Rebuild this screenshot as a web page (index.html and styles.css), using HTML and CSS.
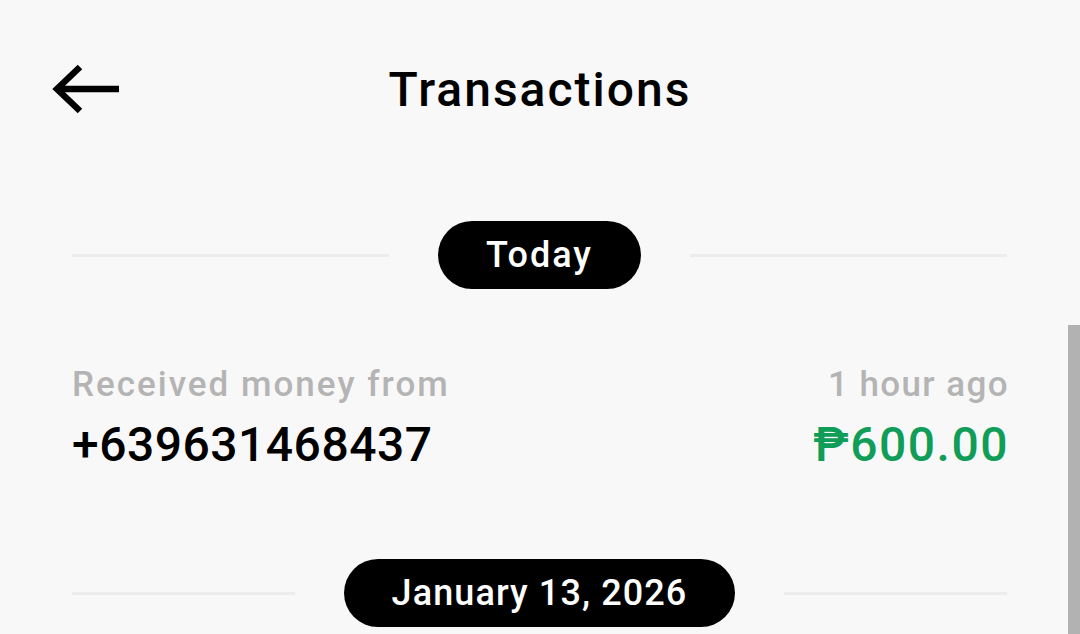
FILE: index.html
```html
<!DOCTYPE html>
<html lang="en">
<head>
    <meta charset="UTF-8">
    <meta name="viewport" content="width=device-width, initial-scale=1.0">
    <title>Transactions</title>
    <link rel="stylesheet" href="styles.css">
</head>
<body>
    <header class="top-bar">
        <button class="back-button" aria-label="Back">
            <svg width="68" height="50" viewBox="0 0 68 50">
                <path d="M67 25H6M28 3L5 25L28 47" fill="none" stroke="#000" stroke-width="6.5" stroke-linejoin="miter"/>
            </svg>
        </button>
        <h1 class="title">Transactions</h1>
        <span></span>
    </header>

    <main class="list">
        <div class="date-divider">
            <span class="line"></span>
            <span class="date-pill">Today</span>
            <span class="line"></span>
        </div>

        <div class="transaction">
            <div class="row">
                <span class="label">Received money from</span>
                <span class="label label-time">1 hour ago</span>
            </div>
            <div class="row row-main">
                <span class="party">+639631468437</span>
                <span class="amount">&#8369;600.00</span>
            </div>
        </div>

        <div class="date-divider">
            <span class="line"></span>
            <span class="date-pill date-long">January 13, 2026</span>
            <span class="line"></span>
        </div>
    </main>

    <div class="scroll-thumb"></div>
</body>
</html>
```

FILE: styles.css
```css
html, body {
    margin: 0;
    height: 100%;
    overflow: hidden;
}
body {
    font-family: Roboto, "Noto Sans", sans-serif;
    background-color: #f8f8f8;
    color: #000;
}
.top-bar {
    display: grid;
    grid-template-columns: 1fr auto 1fr;
    align-items: center;
    height: 178px;
    padding-left: 52px;
    padding-right: 52px;
}
.back-button {
    justify-self: start;
    background: none;
    border: none;
    padding: 0;
    display: flex;
    cursor: pointer;
}
.title {
    margin: 0;
    font-size: 48px;
    font-weight: 500;
    letter-spacing: 2px;
}
.list {
    padding: 43px 73px 0 72px;
}
.date-divider {
    display: flex;
    align-items: center;
    gap: 49px;
}
.line {
    flex: 1;
    height: 3px;
    background-color: #ececec;
}
.date-pill {
    background-color: #000;
    color: #fff;
    font-size: 36px;
    font-weight: 500;
    letter-spacing: 2px;
    height: 68px;
    line-height: 68px;
    padding: 0 48px;
    border-radius: 34px;
}
.date-long {
    letter-spacing: 1.1px;
}
.transaction {
    padding: 76px 0 82px;
}
.row {
    display: flex;
    justify-content: space-between;
    align-items: baseline;
}
.row-main {
    margin-top: 8px;
}
.label {
    font-size: 35px;
    font-weight: 500;
    color: #b4b4b4;
    line-height: 40px;
    letter-spacing: 2px;
    margin-right: -2px;
}
.label-time {
    letter-spacing: 1.4px;
}
.party {
    font-size: 48px;
    font-weight: 500;
    line-height: 64px;
    letter-spacing: 0.5px;
}
.amount {
    font-size: 48px;
    font-weight: 500;
    line-height: 64px;
    letter-spacing: 1.5px;
    margin-right: -2px;
    color: #0f9d58;
}
.scroll-thumb {
    position: fixed;
    right: 0;
    top: 325px;
    bottom: 0;
    width: 12px;
    background-color: #b2b2b2;
}
```
